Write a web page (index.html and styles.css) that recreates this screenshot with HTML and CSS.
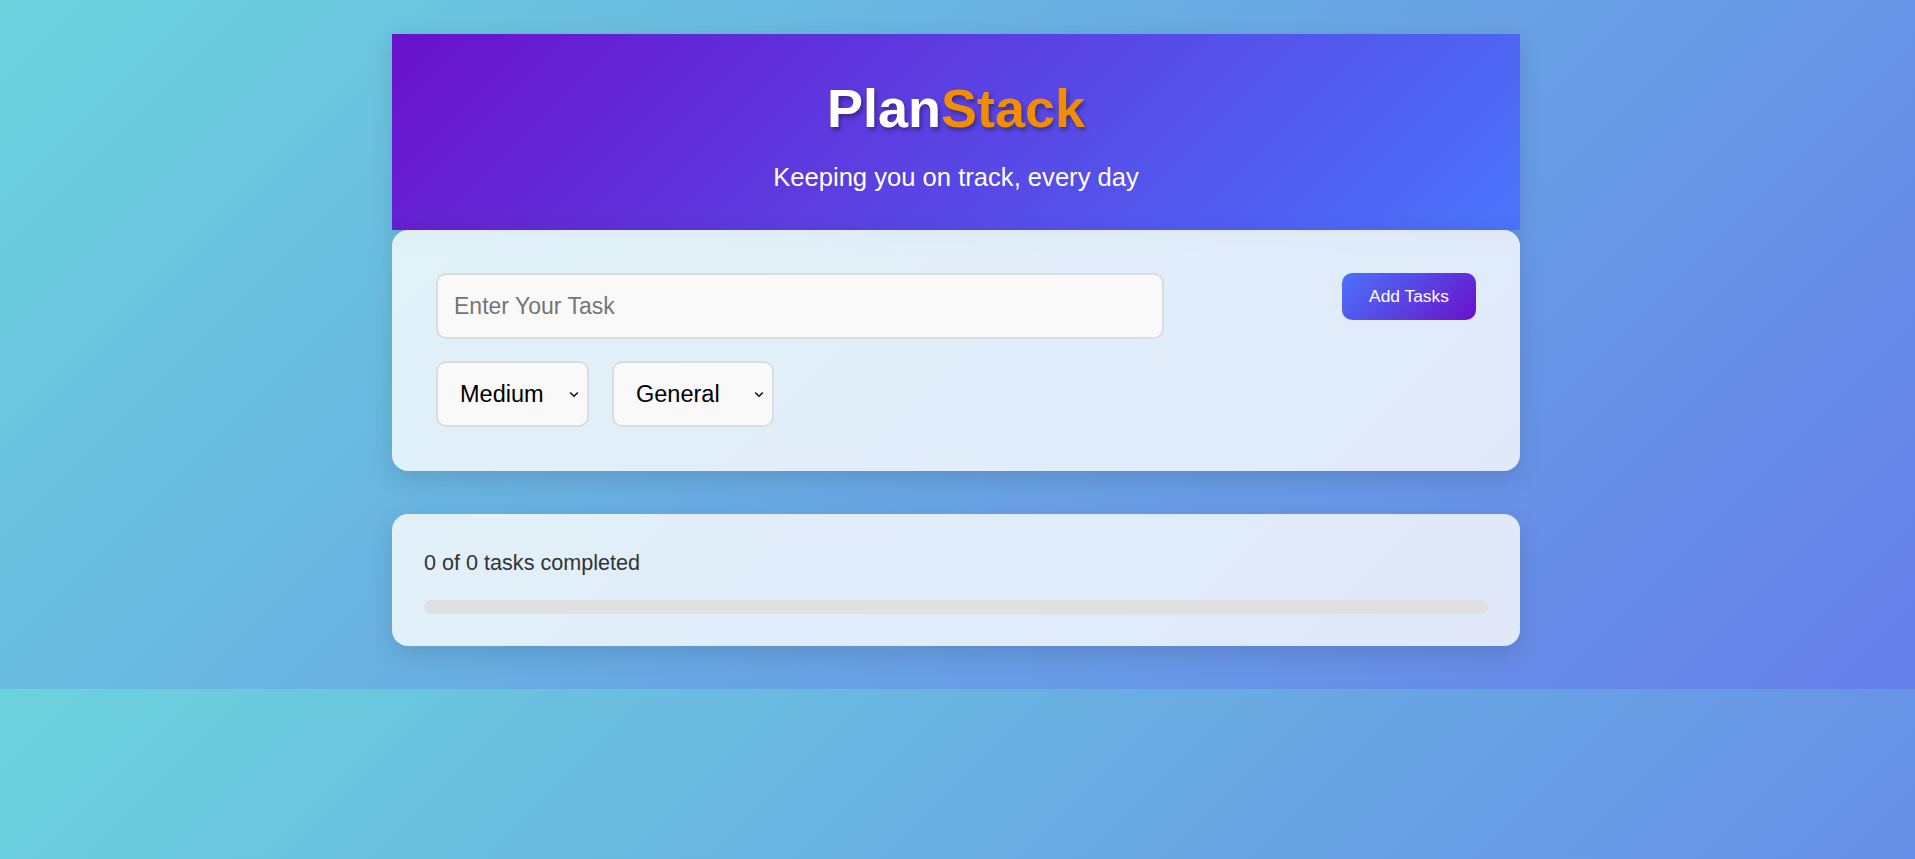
FILE: index.html
```html
<!DOCTYPE html>
<html lang="en">
<head>
<meta charset="utf-8">
<title>PlanStack</title>
<link rel="stylesheet" href="styles.css">
</head>
<body>
  <div class="container">
    <header class="header">
      <h1 class="title">Plan<span class="accent">Stack</span></h1>
      <p class="subtitle">Keeping you on track, every day</p>
    </header>
    <section class="card entry">
      <div class="entry-row">
        <input class="task-input" type="text" placeholder="Enter Your Task">
        <button class="add-btn">Add Tasks</button>
      </div>
      <div class="select-row">
        <select class="sel sel-priority">
          <option>Medium</option>
        </select>
        <select class="sel sel-category">
          <option>General</option>
        </select>
      </div>
    </section>
    <section class="card progress-card">
      <p class="progress-text">0 of 0 tasks completed</p>
      <div class="progress-bar"><div class="progress-fill"></div></div>
    </section>
  </div>
</body>
</html>
```

FILE: styles.css
```css
* { box-sizing: border-box; }

body {
  margin: 0;
  padding: 34px 3px 43px 0;
  font-family: "Liberation Sans", Arial, sans-serif;
  background: linear-gradient(135deg, #6bd3dc 0%, #667eea 100%);
}

.container {
  width: 1128px;
  margin: 0 auto;
}

.header {
  height: 196px;
  background: linear-gradient(135deg, #6a11cb 0%, #4a74fb 100%);
  color: #fff;
  text-align: center;
  padding-top: 43px;
  box-shadow: 0 6px 20px rgba(0, 0, 0, 0.12);
  position: relative;
  z-index: 0;
}

.title {
  margin: 0;
  font-size: 54px;
  line-height: 62px;
  font-weight: 700;
  text-shadow: 2px 3px 4px rgba(0, 0, 0, 0.35);
}

.accent { color: #f28c00; }

.subtitle {
  margin: 23px 0 0;
  font-size: 25.6px;
  line-height: 30px;
}

.card {
  background: rgba(255, 255, 255, 0.8);
  border-radius: 16px;
  box-shadow: 0 8px 24px rgba(0, 0, 0, 0.12);
  position: relative;
  z-index: 1;
}

.entry {
  padding: 43px 44px 44px;
}

.entry-row {
  display: flex;
  justify-content: space-between;
  align-items: flex-start;
}

.task-input {
  width: 70%;
  height: 66px;
  padding: 0 16px;
  border: 2px solid #dcdcdc;
  border-radius: 10px;
  background: #f9f9f9;
  font-family: "Liberation Sans", Arial, sans-serif;
  font-size: 23px;
  color: #333;
  outline: none;
}

.task-input::placeholder { color: #757575; }

.add-btn {
  width: 134px;
  height: 47px;
  border: none;
  border-radius: 10px;
  background: linear-gradient(135deg, #4a74fb 0%, #6a11cb 100%);
  color: #fff;
  font-family: "Liberation Sans", Arial, sans-serif;
  font-size: 17.4px;
  cursor: pointer;
}

.select-row {
  display: flex;
  gap: 23px;
  margin-top: 22px;
}

.sel {
  -webkit-appearance: none;
  appearance: none;
  height: 66px;
  padding: 0 30px 0 22px;
  border: 2px solid #dcdcdc;
  border-radius: 10px;
  background-color: #f9f9f9;
  background-image: url("data:image/svg+xml;utf8,<svg xmlns='http://www.w3.org/2000/svg' width='10' height='7' viewBox='0 0 10 7'><path d='M1.2 1.5 L5 5.2 L8.8 1.5' fill='none' stroke='%23111' stroke-width='1.6'/></svg>");
  background-repeat: no-repeat;
  background-position: right 8px center;
  font-family: "Liberation Sans", Arial, sans-serif;
  font-size: 23.5px;
  color: #000;
}

.sel-priority { width: 153px; }
.sel-category { width: 162px; }

.progress-card {
  margin-top: 43px;
  padding: 36px 32px 32px;
  height: 132px;
}

.progress-text {
  margin: 0;
  font-size: 21.6px;
  line-height: 26px;
  color: #333;
}

.progress-bar {
  margin-top: 24px;
  height: 14px;
  border-radius: 7px;
  background: #e0e0e0;
  overflow: hidden;
}

.progress-fill {
  width: 0;
  height: 100%;
  background: linear-gradient(90deg, #4a74fb, #6a11cb);
}
```
